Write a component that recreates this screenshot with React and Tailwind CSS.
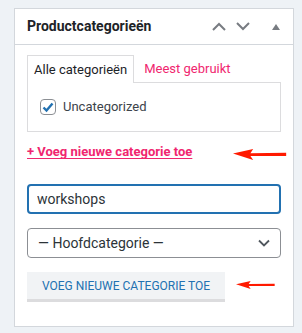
import { useState } from 'react';

function RedArrow({ className }) {
  return (
    <svg className={className} viewBox="0 0 60 12" fill="#ff1a00">
      <polygon points="0,5 22,0 19,4.5 58,4 58,7.5 19,7.5 22,12" />
    </svg>
  );
}

export default function App() {
  const [name, setName] = useState('workshops');
  const [checked, setChecked] = useState(true);

  return (
    <div
      className="w-[302px] h-[333px] bg-[#eef2f6] pt-[8px] pl-[14px] relative"
      style={{ fontFamily: 'Roboto, "Liberation Sans", sans-serif' }}
    >
      <div className="w-[280px] h-[319px] bg-white border border-[#d3d7dc] flex flex-col">
        {/* Header */}
        <div className="h-[36px] border-b border-[#d3d7dc] flex items-center pl-[12px] pr-[13px]">
          <h2 className="text-[14px] font-bold text-[#1d2327] flex-1">Productcategorieën</h2>
          <div className="flex items-center gap-[10px] text-[#787c82]">
            <svg width="14" height="9" viewBox="0 0 14 9" fill="none" stroke="currentColor" strokeWidth="2">
              <path d="M1 8 L7 2 L13 8" />
            </svg>
            <svg width="14" height="9" viewBox="0 0 14 9" fill="none" stroke="currentColor" strokeWidth="2">
              <path d="M1 1 L7 7 L13 1" />
            </svg>
            <svg className="ml-[12px]" width="8" height="6" viewBox="0 0 8 6" fill="currentColor">
              <polygon points="4,0 8,6 0,6" />
            </svg>
          </div>
        </div>

        <div className="px-[12px] pt-[9px] flex flex-col">
          {/* Tabs */}
          <div className="flex items-end h-[28px]">
            <div className="h-[28px] px-[6px] border border-b-0 border-[#dcdcde] bg-white flex items-center text-[13px] text-[#1d2327] relative top-[1px]">
              Alle categorieën
            </div>
            <span className="ml-[10px] h-[27px] flex items-center text-[13px] text-[#f0266f]">Meest gebruikt</span>
          </div>
          <div className="h-[50px] border border-[#dcdcde] flex items-center pl-[12px]">
            <label className="flex items-center gap-[7px] text-[13px] text-[#3c434a]">
              <span
                onClick={() => setChecked(!checked)}
                className="w-[16px] h-[16px] rounded-[4px] border border-[#8c8f94] bg-white flex items-center justify-center"
              >
                {checked && (
                  <svg width="12" height="11" viewBox="0 0 12 11" fill="none" stroke="#2271b1" strokeWidth="2.4">
                    <path d="M1.5 5.5 L4.5 8.5 L10.5 1.5" />
                  </svg>
                )}
              </span>
              Uncategorized
            </label>
          </div>

          {/* Add link */}
          <div className="mt-[12px] h-[16px] flex items-center">
            <a href="#" className="text-[13px] font-bold text-[#f0266f] underline underline-offset-[2px]">
              + Voeg nieuwe categorie toe
            </a>
          </div>

          {/* Input */}
          <input
            value={name}
            onChange={(e) => setName(e.target.value)}
            className="mt-[24px] h-[30px] w-full border-2 border-[#2271b1] rounded-[4px] px-[8px] text-[14px] text-[#2c3338] outline-none"
          />

          {/* Select */}
          <div className="mt-[14px] h-[30px] w-full border border-[#8c8f94] rounded-[4px] pl-[10px] pr-[10px] flex items-center text-[14px] text-[#2c3338]">
            <span className="flex-1">— Hoofdcategorie —</span>
            <svg width="12" height="8" viewBox="0 0 12 8" fill="none" stroke="#50575e" strokeWidth="1.8">
              <path d="M1 1.5 L6 6.5 L11 1.5" />
            </svg>
          </div>

          {/* Button */}
          <button className="mt-[14px] w-[198px] h-[30px] bg-[#f1f3f5] border-b-[3px] border-[#dcdcde] text-[12px] text-[#2271b1] uppercase">
            Voeg nieuwe categorie toe
          </button>
        </div>
      </div>

      {/* annotation arrows */}
      <RedArrow className="absolute left-[232px] top-[149px] w-[57px] h-[11px]" />
      <RedArrow className="absolute left-[236px] top-[280px] w-[40px] h-[10px]" />
    </div>
  );
}
